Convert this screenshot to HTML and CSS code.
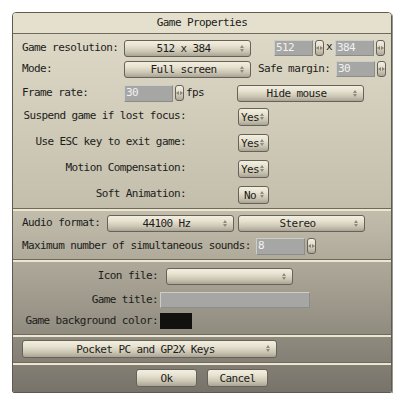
FILE: index.html
```html
<!DOCTYPE html>
<html>
<head>
<meta charset="utf-8">
<link rel="stylesheet" href="styles.css">
</head>
<body>
<div class="dialog">
  <div class="title">Game Properties</div>
  <div class="body">
    <div class="sec s1">
      <div class="row r1">
        <span class="lbl w102">Game resolution:</span>
        <div class="sel w127">512 x 384<i class="ud"></i></div>
        <div class="inp w39 ml23">512</div><div class="spin"></div>
        <span class="xch">x</span>
        <div class="inp w39">384</div><div class="spin"></div>
      </div>
      <div class="row r2">
        <span class="lbl w102">Mode:</span>
        <div class="sel w127">Full screen<i class="ud"></i></div>
        <span class="lbl w78 ml7">Safe margin:</span>
        <div class="inp w39">30</div><div class="spin"></div>
      </div>
      <div class="row r3">
        <span class="lbl w102">Frame rate:</span>
        <div class="inp w49 h17">30</div><div class="spin"></div>
        <span class="lbl w51 ml2">fps</span>
        <div class="sel w127">Hide mouse<i class="ud"></i></div>
      </div>
      <div class="row r4">
        <span class="lbl rt w164">Suspend game if lost focus:</span>
        <div class="sel small">Yes<i class="ud"></i></div>
      </div>
      <div class="row r4">
        <span class="lbl rt w164">Use ESC key to exit game:</span>
        <div class="sel small">Yes<i class="ud"></i></div>
      </div>
      <div class="row r4">
        <span class="lbl rt w164">Motion Compensation:</span>
        <div class="sel small">Yes<i class="ud"></i></div>
      </div>
      <div class="row r5">
        <span class="lbl rt w164">Soft Animation:</span>
        <div class="sel small">No<i class="ud"></i></div>
      </div>
    </div>
    <div class="sep"></div>
    <div class="sec s2">
      <div class="row a1">
        <span class="lbl w85">Audio format:</span>
        <div class="sel w127">44100 Hz<i class="ud"></i></div>
        <div class="sel w127 ml4">Stereo<i class="ud"></i></div>
      </div>
      <div class="row a2">
        <span class="lbl w234">Maximum number of simultaneous sounds:</span>
        <div class="inp w49 h17">8</div><div class="spin"></div>
      </div>
    </div>
    <div class="sep"></div>
    <div class="sec s3">
      <div class="row g1">
        <span class="lbl rt w136">Icon file:</span>
        <div class="sel w127 ml8"><i class="ud"></i></div>
      </div>
      <div class="row g2">
        <span class="lbl rt w136">Game title:</span>
        <div class="inp wide ml2"></div>
      </div>
      <div class="row g2">
        <span class="lbl rt w136">Game background color:</span>
        <div class="swatch ml2"></div>
      </div>
    </div>
    <div class="sep"></div>
    <div class="sec s4">
      <div class="row k1">
        <div class="sel keys">Pocket PC and GP2X Keys<i class="ud"></i></div>
      </div>
    </div>
    <div class="sep"></div>
    <div class="sec s5">
      <div class="btn">Ok</div>
      <div class="btn">Cancel</div>
    </div>
  </div>
</div>
</body>
</html>
```

FILE: styles.css
```css
html, body {
  margin: 0;
  padding: 0;
  background: #ffffff;
}
body {
  font-family: "DejaVu Sans Mono", monospace;
  font-size: 11px;
  letter-spacing: -0.6px;
  color: #1c1c1a;
}
.dialog {
  margin: 12px 0 0 12px;
  width: 378px;
  border: 1px solid #5e5a4f;
  border-radius: 4px 4px 2px 2px;
  overflow: hidden;
  box-shadow: 1px 1px 0 #9a968c;
}
.title {
  height: 20px;
  line-height: 20px;
  text-align: center;
  background: #e4e0cd;
  border-bottom: 1px solid #6e6a5e;
}
.body {
  background: linear-gradient(#ddd9c6 0%, #c4bfad 48%, #a29d8f 72%, #77736a 100%);
}
.sec {
  padding-left: 9px;
  padding-right: 4px;
}
.s1 { padding-top: 6px; }
.s2 { padding-top: 4px; }
.s3 { padding-top: 6px; }
.s4 { padding-top: 3px; height: 22px; }
.s5 {
  padding: 4px 0 0 0;
  height: 23px;
  display: flex;
  justify-content: center;
  gap: 10px;
}
.sep {
  box-sizing: border-box;
  height: 3px;
  background: #ece6d1;
  border-top: 1px solid #6f6a5d;
}
.row {
  display: flex;
  align-items: flex-start;
}
.r1 { height: 21px; }
.r2 { height: 24px; }
.r3 { height: 23px; }
.r4 { height: 26px; }
.r5 { height: 22px; }
.a1 { height: 23px; }
.a2 { height: 21px; }
.g1 { height: 24px; }
.g2 { height: 21px; }
.k1 { height: 19px; }

.lbl {
  display: block;
  height: 17px;
  line-height: 15px;
  white-space: nowrap;
  flex: none;
}
.rt { text-align: right; }
.w102 { width: 102px; }
.w78 { width: 78px; }
.w51 { width: 51px; }
.w164 { width: 216px; padding-right: 52px; box-sizing: border-box; }
.w85 { width: 85px; }
.w234 { width: 234px; }
.w136 { width: 136px; }
.ml2 { margin-left: 2px; }
.ml4 { margin-left: 4px; }
.ml7 { margin-left: 7px; }
.ml8 { margin-left: 8px; }
.ml23 { margin-left: 23px; }

.sel {
  position: relative;
  box-sizing: border-box;
  height: 17px;
  line-height: 16px;
  border: 1px solid #66625a;
  border-radius: 3px;
  background: linear-gradient(#f3efe0 0%, #e6e1cf 35%, #cbc6b4 70%, #a9a393 100%);
  text-align: center;
  flex: none;
  padding-right: 8px;
}
.w127 { width: 127px; }
.small { width: 31px; height: 18px; line-height: 17px; padding-right: 7px; }
.keys { width: 255px; height: 18px; line-height: 17px; }
.ud {
  position: absolute;
  right: 5px;
  top: 50%;
  width: 5px;
  height: 7px;
  margin-top: -4px;
}
.ud::before, .ud::after {
  content: "";
  position: absolute;
  left: 0;
  width: 0;
  height: 0;
  border-left: 2.5px solid transparent;
  border-right: 2.5px solid transparent;
}
.ud::before { top: 0; border-bottom: 3px solid #8e897b; }
.ud::after { bottom: 0; border-top: 3px solid #8e897b; }
.small .ud { right: 3px; }

.inp {
  box-sizing: border-box;
  height: 16px;
  line-height: 14px;
  background: #a6a6a5;
  border: 1px solid #cdcdc8;
  border-right-color: #8c8c88;
  border-bottom-color: #8c8c88;
  color: #f2f2f2;
  padding-left: 1px;
  flex: none;
}
.h17 { height: 17px; }
.w39 { width: 39px; }
.w49 { width: 49px; }
.wide { width: 150px; }
.spin {
  position: relative;
  box-sizing: border-box;
  width: 9px;
  height: 16px;
  margin-left: 2px;
  border: 1px solid #66625a;
  border-radius: 3px;
  background: linear-gradient(#f3efe0 0%, #e2ddcb 40%, #aca696 100%);
  flex: none;
}
.spin::before, .spin::after {
  content: "";
  position: absolute;
  top: 5px;
  width: 0;
  height: 0;
  border-top: 2px solid transparent;
  border-bottom: 2px solid transparent;
}
.spin::before { left: 0px; border-right: 3px solid #8a8577; }
.spin::after { right: 0px; border-left: 3px solid #8a8577; }
.xch {
  display: block;
  width: 11px;
  line-height: 14px;
  padding-left: 2px;
  box-sizing: border-box;
  flex: none;
}
.swatch {
  width: 32px;
  height: 16px;
  background: #121110;
  flex: none;
}
.btn {
  box-sizing: border-box;
  width: 61px;
  height: 18px;
  line-height: 17px;
  text-align: center;
  border: 1px solid #66625a;
  border-radius: 3px;
  background: linear-gradient(#f3efe0 0%, #e6e1cf 35%, #cbc6b4 70%, #a9a393 100%);
}
```
